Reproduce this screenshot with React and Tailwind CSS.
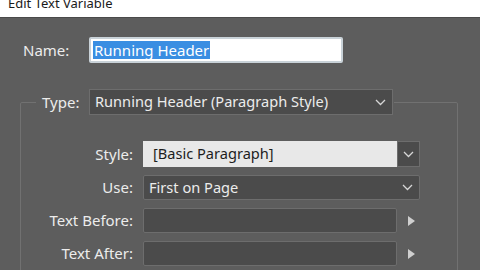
import React from "react";

const Chevron = () => (
  <svg width="11" height="7" viewBox="0 0 11 7" className="block">
    <polyline points="1,1 5.5,5.5 10,1" fill="none" stroke="#d6d6d6" strokeWidth="1.3" />
  </svg>
);

const Tri = () => (
  <svg width="7" height="10" viewBox="0 0 7 10" className="block">
    <polygon points="0,0 7,5 0,10" fill="#cfcfcf" />
  </svg>
);

const Label = ({ children }) => (
  <div className="w-[112px] text-right text-[15px] text-[#ececec]">{children}</div>
);

export default function App() {
  return (
    <div
      className="w-[480px] h-[270px] overflow-hidden bg-[#5d5d5d] flex flex-col"
      style={{ fontFamily: '"Noto Sans", "Open Sans", sans-serif' }}
    >
      <div className="h-[18px] shrink-0 bg-white border-b border-[#4a4a4a] flex items-end pl-[8px] overflow-hidden">
        <span className="text-[13px] leading-[13px] text-[#1a1a1a] mb-[7px]">Edit Text Variable</span>
      </div>

      <div className="flex items-center pl-[23px] mt-[19px] h-[26px]">
        <div className="w-[66px] text-[15px] text-[#ececec]">Name:</div>
        <div className="w-[254px] h-[26px] bg-white border-2 border-[#c9d2d8] rounded-[2px] flex items-center pl-[2px]">
          <span className="bg-[#3a8ee2] text-white text-[15px] leading-[18px] px-[1px]">Running Header</span>
        </div>
      </div>

      <fieldset className="ml-[20px] mt-[26px] w-[438px] border border-[#717171] rounded-[2px] pb-[10px]">
        <legend className="ml-[15px] pr-[1px]">
          <div className="flex items-center">
            <div className="w-[53px] pl-[6px] text-[15px] text-[#ececec]">Type:</div>
            <div className="w-[304px] h-[26px] bg-[#4b4b4b] border border-[#6d6d6d] flex items-center justify-between pl-[5px] pr-[6px]">
              <span className="text-[14.6px] text-[#ececec]">Running Header (Paragraph Style)</span>
              <Chevron />
            </div>
          </div>
        </legend>

        <div className="flex flex-col gap-[8px] mt-[26px]">
          <div className="flex items-center gap-[10px]">
            <Label>Style:</Label>
            <div className="flex h-[26px]">
              <div className="w-[254px] bg-[#e8e8e8] flex items-center pl-[10px] text-[14.6px] text-[#1e1e1e]">
                [Basic Paragraph]
              </div>
              <div className="w-[23px] bg-[#4b4b4b] border border-[#6d6d6d] flex items-center justify-center">
                <Chevron />
              </div>
            </div>
          </div>

          <div className="flex items-center gap-[10px]">
            <Label>Use:</Label>
            <div className="w-[277px] h-[25px] bg-[#4b4b4b] border border-[#6d6d6d] rounded-[2px] flex items-center justify-between pl-[5px] pr-[6px]">
              <span className="text-[14.6px] text-[#ececec]">First on Page</span>
              <Chevron />
            </div>
          </div>

          <div className="flex items-center gap-[10px]">
            <Label>Text Before:</Label>
            <div className="w-[254px] h-[25px] bg-[#4b4b4b] border border-[#6d6d6d] rounded-[2px]" />
            <div className="ml-[1px]"><Tri /></div>
          </div>

          <div className="flex items-center gap-[10px]">
            <Label>Text After:</Label>
            <div className="w-[254px] h-[25px] bg-[#4b4b4b] border border-[#6d6d6d] rounded-[2px]" />
            <div className="ml-[1px]"><Tri /></div>
          </div>
        </div>
      </fieldset>
    </div>
  );
}
